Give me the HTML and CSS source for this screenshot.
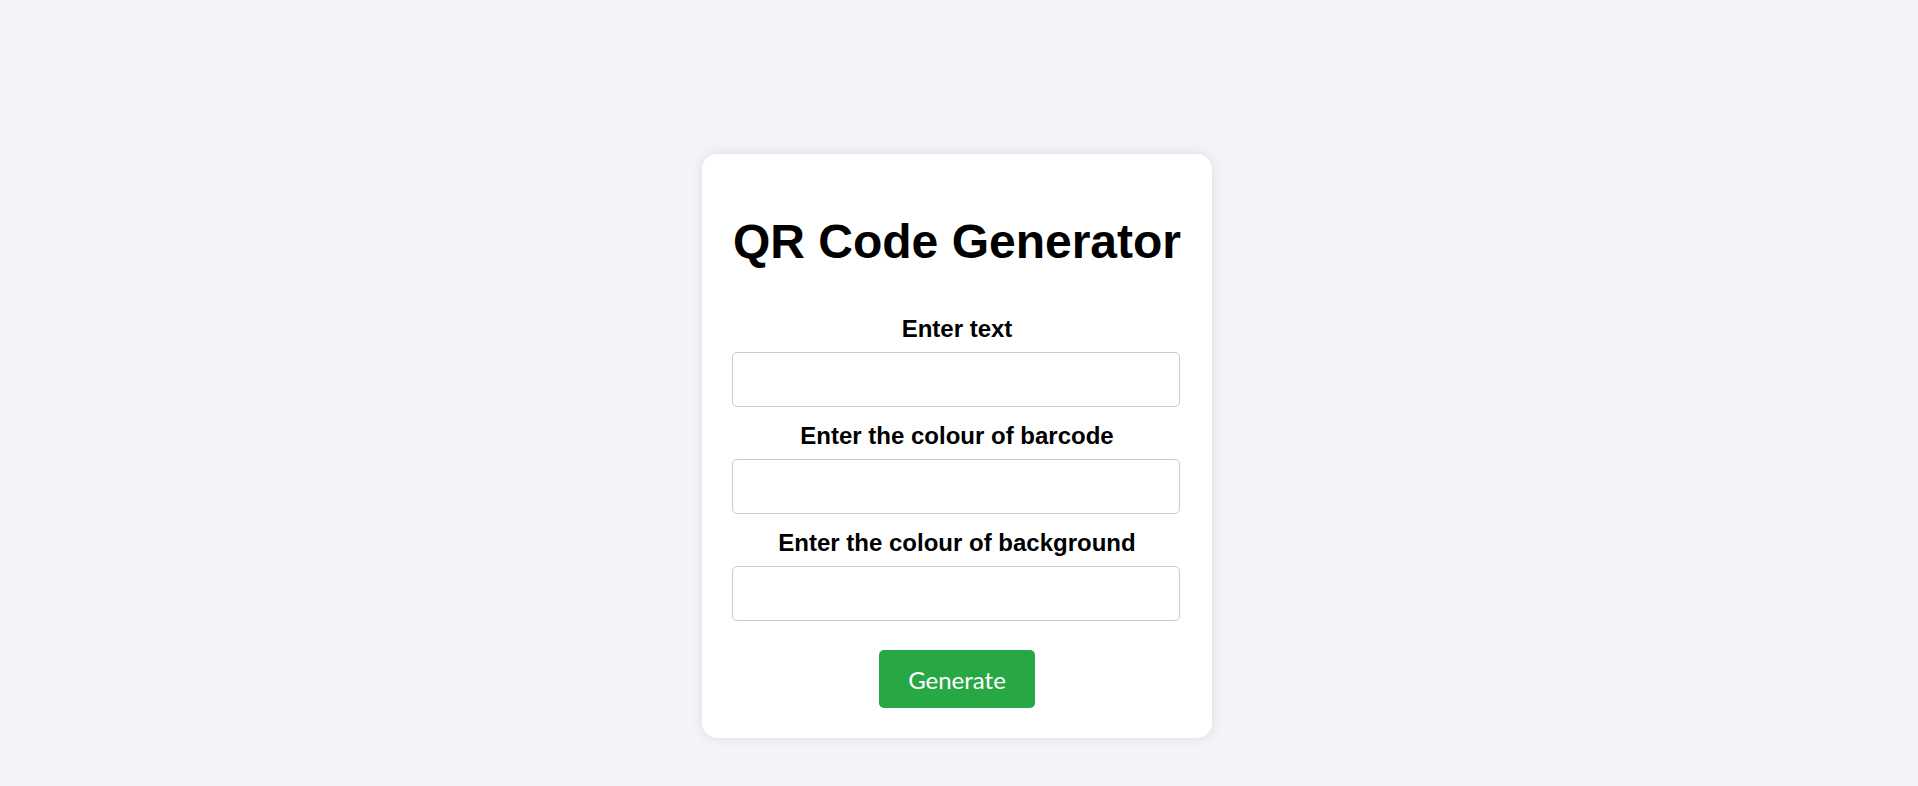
FILE: index.html
```html
<!DOCTYPE html>
<html lang="en">
<head>
<meta charset="utf-8">
<title>QR Code Generator</title>
<link rel="stylesheet" href="styles.css">
</head>
<body>
<main class="page">
  <section class="card">
    <h1 class="title">QR Code Generator</h1>
    <form class="form">
      <label class="label" for="text">Enter text</label>
      <input class="field" id="text" type="text">
      <label class="label" for="fg">Enter the colour of barcode</label>
      <input class="field" id="fg" type="text">
      <label class="label" for="bg">Enter the colour of background</label>
      <input class="field" id="bg" type="text">
      <button class="btn" type="button">Generate</button>
    </form>
  </section>
</main>
</body>
</html>
```

FILE: styles.css
```css
html, body {
  margin: 0;
  padding: 0;
}

body {
  background: #f3f3f8;
  font-family: "Liberation Sans", Arial, sans-serif;
  color: #000;
}

.page {
  display: flex;
  justify-content: center;
  align-items: flex-start;
  padding-top: 154px;
  padding-right: 4px;
  min-height: 786px;
  box-sizing: border-box;
}

.card {
  width: 510px;
  box-sizing: border-box;
  padding: 30px;
  background: #fff;
  border-radius: 15px;
  box-shadow: 0 0 12px rgba(0, 0, 0, 0.1);
  text-align: center;
}

.title {
  font-size: 48px;
  line-height: 56px;
  font-weight: bold;
  margin: 30px 0 0;
}

.form {
  display: flex;
  flex-direction: column;
  align-items: center;
  padding-top: 45px;
}

.label {
  display: block;
  font-size: 24px;
  line-height: 28px;
  font-weight: bold;
  margin-bottom: 9px;
}

.field {
  display: block;
  align-self: flex-start;
  width: 448px;
  height: 55px;
  box-sizing: border-box;
  border: 1px solid #cccccc;
  border-radius: 5px;
  margin: 0 0 15px;
  padding: 10px;
  font-size: 16px;
  background: #fff;
}

.field:last-of-type {
  margin-bottom: 0;
}

.btn {
  margin-top: 29px;
  width: 156px;
  height: 58px;
  padding: 0;
  box-sizing: border-box;
  border: none;
  border-radius: 5px;
  background: #28a745;
  color: #fff;
  font-family: Lato, "Open Sans", sans-serif;
  font-size: 24px;
  cursor: pointer;
}
```
